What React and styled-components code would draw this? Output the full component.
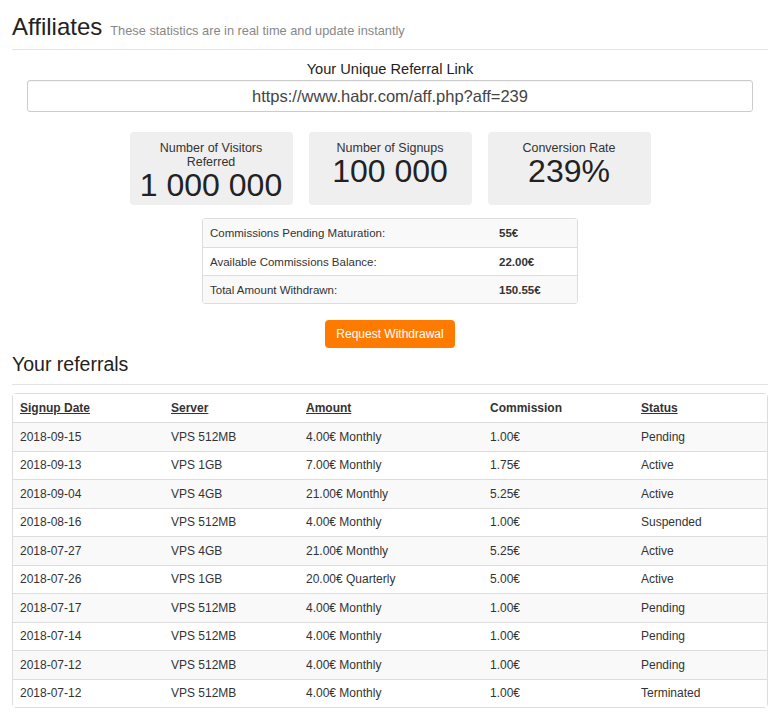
import React from "react";
import styled, { createGlobalStyle } from "styled-components";

const Global = createGlobalStyle`
  html, body { margin: 0; padding: 0; background: #fff; }
  body { font-family: "Liberation Sans", Arial, sans-serif; color: #333; }
  * { box-sizing: border-box; }
`;

const Page = styled.div`
  width: 780px;
  padding: 0 12px;
  display: flex;
  flex-direction: column;
`;

const PageHeader = styled.div`
  display: flex;
  align-items: baseline;
  gap: 8px;
  margin-top: 14px;
  padding-bottom: 9px;
  border-bottom: 1px solid #e3e3e3;
`;

const Title = styled.h1`
  margin: 0;
  font-size: 24px;
  line-height: 26px;
  font-weight: normal;
  color: #222;
`;

const Subtitle = styled.span`
  font-size: 12.8px;
  color: #888;
`;

const LinkLabel = styled.div`
  margin-top: 9px;
  text-align: center;
  font-size: 14.6px;
  line-height: 21px;
  color: #222;
`;

const LinkInput = styled.div`
  margin: 0 15px;
  height: 32px;
  border: 1px solid #ccc;
  border-radius: 3px;
  box-shadow: inset 0 1px 1px rgba(0, 0, 0, 0.05);
  display: flex;
  align-items: center;
  justify-content: center;
  font-size: 16.5px;
  color: #444;
`;

const StatRow = styled.div`
  margin-top: 20px;
  display: flex;
  justify-content: center;
  gap: 16px;
`;

const StatBox = styled.div`
  width: 163px;
  height: 73px;
  background: #efefef;
  border-radius: 4px;
  padding: 9px 10px 0;
  text-align: center;
  display: flex;
  flex-direction: column;
  align-items: center;
`;

const StatLabel = styled.div`
  font-size: 12.5px;
  line-height: 14px;
  color: #333;
`;

const StatValue = styled.div`
  margin-top: 1px;
  font-size: 32px;
  line-height: 30px;
  color: #222;
`;

const CommissionTable = styled.table`
  margin: 13px auto 0;
  width: 376px;
  border: 1px solid #ddd;
  border-radius: 3px;
  border-spacing: 0;
  font-size: 11.5px;
`;

const Row = styled.tr`
  background: ${(p) => (p.$striped ? "#f9f9f9" : "#fff")};
`;

const CommCell = styled.td`
  height: 28px;
  padding: 0 7px;
  border-top: ${(p) => (p.$first ? "none" : "1px solid #ddd")};
  font-weight: ${(p) => (p.$bold ? "bold" : "normal")};
  width: ${(p) => p.$w || "auto"};
  color: #333;
`;

const ButtonWrap = styled.div`
  margin-top: 16px;
  display: flex;
  justify-content: center;
`;

const OrangeButton = styled.button`
  height: 28px;
  width: 130px;
  border: none;
  border-radius: 4px;
  background: #ff7b00;
  color: #fff;
  font-family: "Liberation Sans", Arial, sans-serif;
  font-size: 12px;
  cursor: pointer;
`;

const SectionTitle = styled.h2`
  margin: 5px 0 0;
  padding-bottom: 9px;
  border-bottom: 1px solid #e3e3e3;
  font-size: 19.5px;
  line-height: 22px;
  font-weight: normal;
  color: #222;
`;

const RefTable = styled.table`
  margin-top: 8px;
  width: 756px;
  border: 1px solid #ddd;
  border-radius: 4px;
  border-spacing: 0;
  font-size: 12px;
  table-layout: fixed;
`;

const HeadCell = styled.th`
  height: 28px;
  padding: 0 7px;
  text-align: left;
  font-weight: bold;
  color: #333;
  width: ${(p) => p.$w};
`;

const HeadLink = styled.a`
  color: #333;
  text-decoration: underline;
`;

const Cell = styled.td`
  height: 28.5px;
  padding: 0 7px;
  border-top: 1px solid #ddd;
  color: #333;
`;

const commissions = [
  ["Commissions Pending Maturation:", "55€"],
  ["Available Commissions Balance:", "22.00€"],
  ["Total Amount Withdrawn:", "150.55€"],
];

const columns = [
  { label: "Signup Date", link: true, w: "151px" },
  { label: "Server", link: true, w: "135px" },
  { label: "Amount", link: true, w: "184px" },
  { label: "Commission", link: false, w: "151px" },
  { label: "Status", link: true, w: "133px" },
];

const referrals = [
  ["2018-09-15", "VPS 512MB", "4.00€ Monthly", "1.00€", "Pending"],
  ["2018-09-13", "VPS 1GB", "7.00€ Monthly", "1.75€", "Active"],
  ["2018-09-04", "VPS 4GB", "21.00€ Monthly", "5.25€", "Active"],
  ["2018-08-16", "VPS 512MB", "4.00€ Monthly", "1.00€", "Suspended"],
  ["2018-07-27", "VPS 4GB", "21.00€ Monthly", "5.25€", "Active"],
  ["2018-07-26", "VPS 1GB", "20.00€ Quarterly", "5.00€", "Active"],
  ["2018-07-17", "VPS 512MB", "4.00€ Monthly", "1.00€", "Pending"],
  ["2018-07-14", "VPS 512MB", "4.00€ Monthly", "1.00€", "Pending"],
  ["2018-07-12", "VPS 512MB", "4.00€ Monthly", "1.00€", "Pending"],
  ["2018-07-12", "VPS 512MB", "4.00€ Monthly", "1.00€", "Terminated"],
];

export default function App() {
  return (
    <>
      <Global />
      <Page>
        <PageHeader>
          <Title>Affiliates</Title>
          <Subtitle>These statistics are in real time and update instantly</Subtitle>
        </PageHeader>

        <LinkLabel>Your Unique Referral Link</LinkLabel>
        <LinkInput>https://www.habr.com/aff.php?aff=239</LinkInput>

        <StatRow>
          <StatBox>
            <StatLabel>
              Number of Visitors
              <br />
              Referred
            </StatLabel>
            <StatValue>1 000 000</StatValue>
          </StatBox>
          <StatBox>
            <StatLabel>Number of Signups</StatLabel>
            <StatValue>100 000</StatValue>
          </StatBox>
          <StatBox>
            <StatLabel>Conversion Rate</StatLabel>
            <StatValue>239%</StatValue>
          </StatBox>
        </StatRow>

        <CommissionTable>
          <tbody>
            {commissions.map(([label, value], i) => (
              <Row key={label} $striped={i % 2 === 0}>
                <CommCell $first={i === 0} $w="289px">{label}</CommCell>
                <CommCell $first={i === 0} $bold>{value}</CommCell>
              </Row>
            ))}
          </tbody>
        </CommissionTable>

        <ButtonWrap>
          <OrangeButton>Request Withdrawal</OrangeButton>
        </ButtonWrap>

        <SectionTitle>Your referrals</SectionTitle>

        <RefTable>
          <thead>
            <Row>
              {columns.map((c) => (
                <HeadCell key={c.label} $w={c.w}>
                  {c.link ? <HeadLink href="#">{c.label}</HeadLink> : c.label}
                </HeadCell>
              ))}
            </Row>
          </thead>
          <tbody>
            {referrals.map((r, i) => (
              <Row key={i} $striped={i % 2 === 0}>
                {r.map((v, j) => (
                  <Cell key={j}>{v}</Cell>
                ))}
              </Row>
            ))}
          </tbody>
        </RefTable>
      </Page>
    </>
  );
}
